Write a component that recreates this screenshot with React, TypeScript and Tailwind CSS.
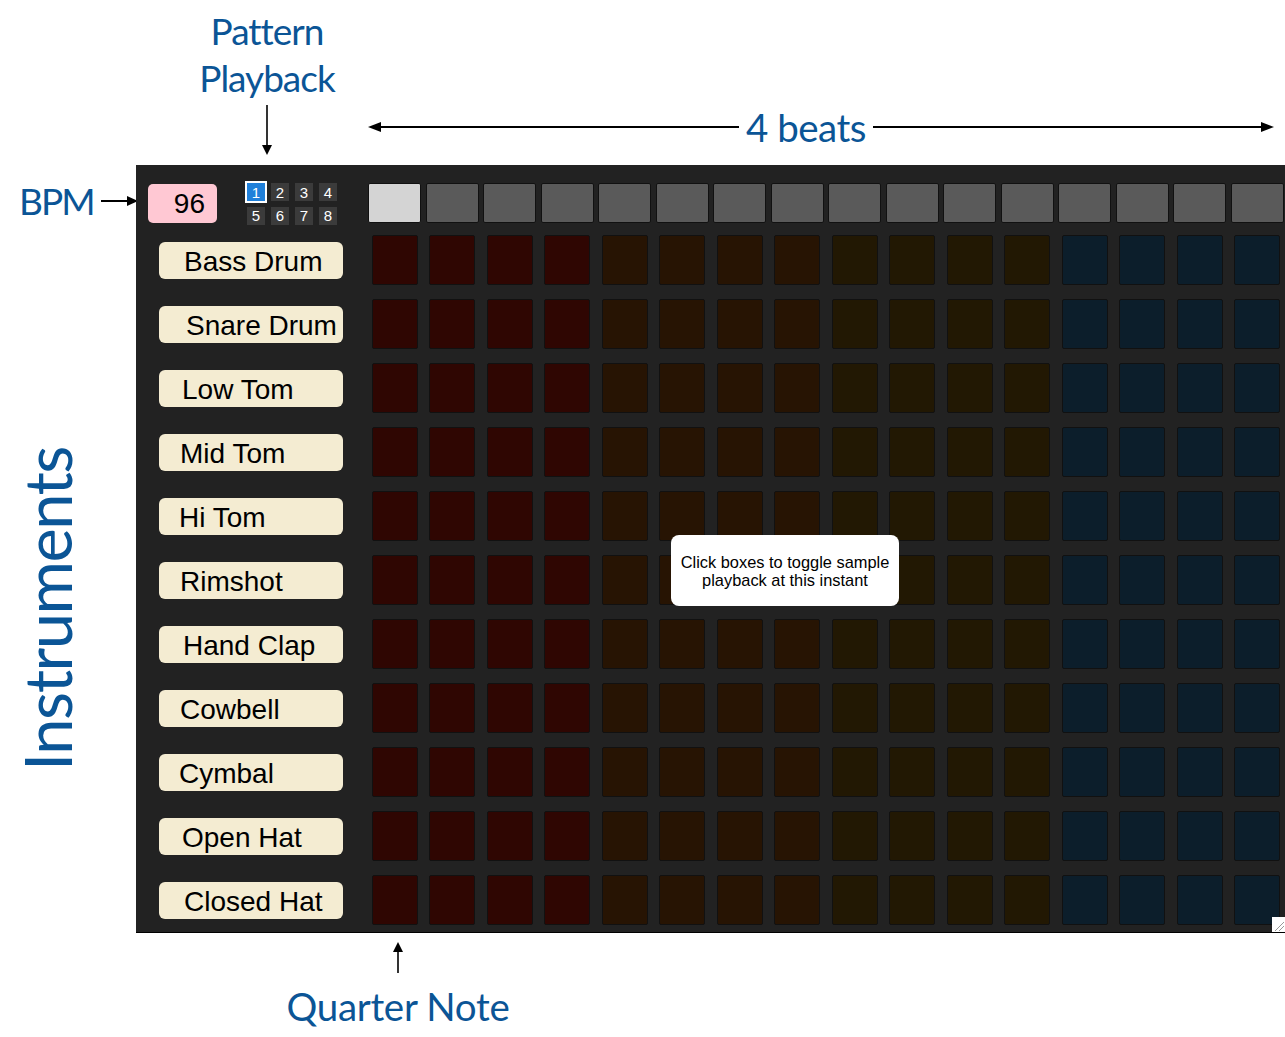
import React from "react";

const INSTRUMENTS = [
  { name: "Bass Drum", pl: "pl-[25px]" },
  { name: "Snare Drum", pl: "pl-[27px]" },
  { name: "Low Tom", pl: "pl-[23px]" },
  { name: "Mid Tom", pl: "pl-[21px]" },
  { name: "Hi Tom", pl: "pl-[20px]" },
  { name: "Rimshot", pl: "pl-[21px]" },
  { name: "Hand Clap", pl: "pl-[24px]" },
  { name: "Cowbell", pl: "pl-[21px]" },
  { name: "Cymbal", pl: "pl-[20px]" },
  { name: "Open Hat", pl: "pl-[23px]" },
  { name: "Closed Hat", pl: "pl-[25px]" },
];

// one colour per beat, four steps each
const BEAT_COLORS = ["bg-[#2f0602]", "bg-[#271403]", "bg-[#221803]", "bg-[#0c1e2b]"];

const STEPS = Array.from({ length: 16 }, (_, i) => i);

function DownArrow({ h }: { h: number }) {
  return (
    <svg width="12" height={h} viewBox={`0 0 12 ${h}`}>
      <line x1="6" y1="0" x2="6" y2={h - 8} stroke="#000" strokeWidth="1.6" />
      <polygon points={`1,${h - 10} 11,${h - 10} 6,${h}`} fill="#000" />
    </svg>
  );
}

function UpArrow({ h }: { h: number }) {
  return (
    <svg width="12" height={h} viewBox={`0 0 12 ${h}`}>
      <line x1="6" y1="8" x2="6" y2={h} stroke="#000" strokeWidth="1.6" />
      <polygon points="1,10 11,10 6,0" fill="#000" />
    </svg>
  );
}

function Panel() {
  return (
    <div className="relative w-[1149px] h-[768px] bg-[#222222] border-b border-black overflow-hidden font-['Liberation_Sans',Arial,sans-serif]">
      {/* header: bpm, patterns, step indicators */}
      <div className="flex h-[64px] pt-[18px]">
        <div className="w-[232px] shrink-0 flex items-start pl-[12px]">
          <div className="mt-[1px] w-[69px] h-[39px] rounded-[5px] bg-[#ffc8d3] flex items-center justify-end pr-[12px] text-[28px] text-black">
            96
          </div>
          <div className="ml-[30px] grid grid-cols-[repeat(4,18px)] gap-x-[6px] gap-y-[5.7px]">
            {[1, 2, 3, 4, 5, 6, 7, 8].map((n) => (
              <div
                key={n}
                className={
                  n === 1
                    ? "w-[18px] h-[18px] bg-[#1f80da] outline-2 outline-white flex items-center justify-center text-[15px] leading-none text-white"
                    : "w-[18px] h-[18px] bg-[#3b3b3b] flex items-center justify-center text-[15px] leading-none text-white"
                }
              >
                {n}
              </div>
            ))}
          </div>
        </div>
        <div className="grid grid-cols-[repeat(16,53px)] gap-x-[4.5px] shrink-0">
          {STEPS.map((s) => (
            <div
              key={s}
              className={
                s === 0
                  ? "h-[40px] rounded-[2px] border border-[#111] bg-[#d4d4d4]"
                  : "h-[40px] rounded-[2px] border border-[#111] bg-[#5a5a5a]"
              }
            />
          ))}
        </div>
      </div>

      {/* instrument rows */}
      {INSTRUMENTS.map((inst) => (
        <div key={inst.name} className="flex h-[64px] items-start">
          <div className="w-[232px] shrink-0 pl-[23px] pt-[13px]">
            <div
              className={`w-[184px] h-[37px] pt-[2px] rounded-[6px] bg-[#f4ecd2] flex items-center text-[28px] leading-none text-black whitespace-nowrap ${inst.pl}`}
            >
              {inst.name}
            </div>
          </div>
          <div className="grid grid-cols-[repeat(16,53px)] gap-x-[4.5px] shrink-0 pt-[6px]">
            {STEPS.map((s) => (
              <div
                key={s}
                className={`mx-auto w-[46px] h-[50px] rounded-[2px] border border-[#111] ${BEAT_COLORS[Math.floor(s / 4)]}`}
              />
            ))}
          </div>
        </div>
      ))}

      {/* tooltip */}
      <div className="absolute left-[535px] top-[370px] w-[228px] h-[71px] rounded-[8px] bg-white flex flex-col items-center justify-center text-[16.4px] leading-[18px] text-black text-center">
        <div>Click boxes to toggle sample</div>
        <div>playback at this instant</div>
      </div>

      {/* resize grip */}
      <svg className="absolute right-0 bottom-0" width="13" height="15" viewBox="0 0 13 15">
        <rect width="13" height="15" fill="#fff" />
        <line x1="3" y1="14" x2="12" y2="5" stroke="#999" strokeWidth="1" />
        <line x1="7" y1="14" x2="12" y2="9" stroke="#999" strokeWidth="1" />
      </svg>
    </div>
  );
}

export default function App() {
  return (
    <div className="w-[1285px] h-[1037px] bg-white overflow-hidden flex flex-col font-['Lato',sans-serif] text-[#0b5596]">
      {/* top annotations */}
      <div className="flex h-[165px] shrink-0">
        <div className="ml-[187px] w-[160px] flex flex-col items-center">
          <div className="mt-[7px] text-[37px] leading-[47px] text-center tracking-[-1px]">
            Pattern
            <br />
            Playback
          </div>
          <div className="mt-[4px]">
            <DownArrow h={50} />
          </div>
        </div>
        <div className="ml-[21px] mt-[112px] w-[906px] h-[30px] flex items-center">
          <div className="w-0 h-0 border-y-[5px] border-y-transparent border-r-[13px] border-r-black" />
          <div className="w-[358px] h-[2px] bg-black" />
          <div className="px-[7px] text-[38.5px] leading-none tracking-[-0.5px]">4 beats</div>
          <div className="flex-1 h-[2px] bg-black" />
          <div className="w-0 h-0 border-y-[5px] border-y-transparent border-l-[13px] border-l-black" />
        </div>
      </div>

      {/* body */}
      <div className="flex shrink-0">
        <div className="w-[136px] shrink-0 flex flex-col">
          <div className="flex items-center pl-[19px] mt-[16px]">
            <span className="text-[37px] leading-[40px] tracking-[-2px]">BPM</span>
            <div className="ml-[7px] flex items-center">
              <div className="w-[26px] h-[2px] bg-black" />
              <div className="w-0 h-0 border-y-[5px] border-y-transparent border-l-[11px] border-l-black" />
            </div>
          </div>
          <div className="mt-[226px] self-start ml-[14px] [writing-mode:vertical-rl] rotate-180 text-[65px] leading-[66px] tracking-[-1.5px]">
            Instruments
          </div>
        </div>
        <Panel />
      </div>

      {/* bottom annotation */}
      <div className="ml-[268px] w-[260px] flex flex-col items-center">
        <div className="mt-[9px]">
          <UpArrow h={31} />
        </div>
        <div className="mt-[14px] text-[38.5px] leading-none tracking-[-0.3px]">Quarter Note</div>
      </div>
    </div>
  );
}
